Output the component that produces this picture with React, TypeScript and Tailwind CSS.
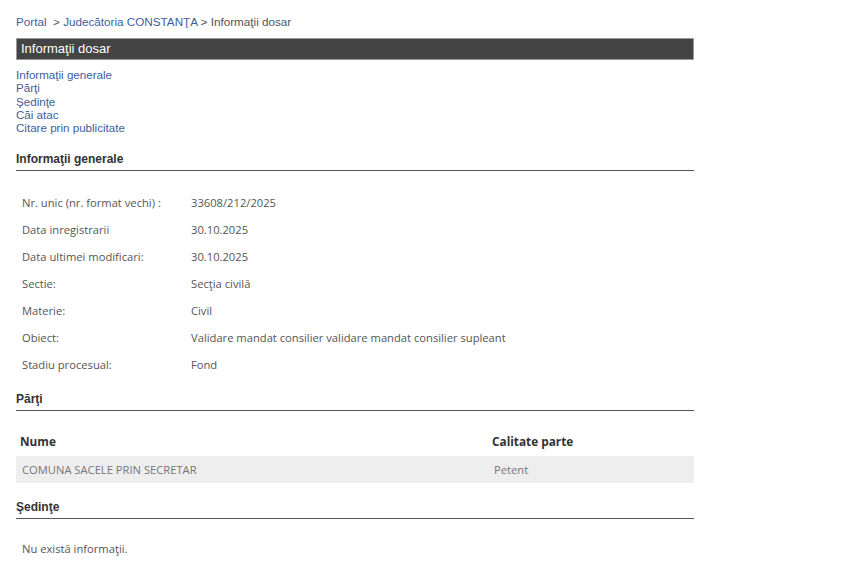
import React from 'react'

const info: [string, string][] = [
  ['Nr. unic (nr. format vechi) :', '33608/212/2025'],
  ['Data inregistrarii', '30.10.2025'],
  ['Data ultimei modificari:', '30.10.2025'],
  ['Sectie:', 'Secţia civilă'],
  ['Materie:', 'Civil'],
  ['Obiect:', 'Validare mandat consilier validare mandat consilier supleant'],
  ['Stadiu procesual:', 'Fond'],
]

const links = ['Informaţii generale', 'Părţi', 'Şedinţe', 'Căi atac', 'Citare prin publicitate']

function SectionTitle({ children }: { children: React.ReactNode }) {
  return (
    <div className="leading-[14px] pb-[4px] border-b border-[#555] text-[12px] font-bold text-[#333]">
      {children}
    </div>
  )
}

const body = { fontFamily: '"Open Sans", "DejaVu Sans", sans-serif' }

export default function App() {
  return (
    <div className="min-h-screen bg-white" style={{ fontFamily: '"Liberation Sans", Arial, sans-serif' }}>
      <div className="w-[678px] ml-[16px] pt-[15px]">
        <div className="text-[11.7px] text-[#555] leading-[14px]">
          <span className="text-[#3d5e9e]">Portal</span>
          <span> &nbsp;&gt; </span>
          <span className="text-[#3d5e9e]">Judecătoria CONSTANŢA</span>
          <span> &gt; Informaţii dosar</span>
        </div>

        <div className="mt-[9px] h-[22px] bg-[#444] border border-[#999] flex items-center px-[4px] text-[13px] text-white">
          Informaţii dosar
        </div>

        <div className="mt-[8px] flex flex-col text-[11.6px] leading-[13.3px] text-[#3d5e9e]">
          {links.map(l => (
            <span key={l}>{l}</span>
          ))}
        </div>

        <div className="mt-[18px]">
          <SectionTitle>Informaţii generale</SectionTitle>
        </div>

        <div className="mt-[18px] flex flex-col text-[11.2px] text-[#555]" style={body}>
          {info.map(([k, v]) => (
            <div key={k} className="h-[27px] flex items-center">
              <span className="w-[175px] pl-[6px]">{k}</span>
              <span>{v}</span>
            </div>
          ))}
        </div>

        <div className="mt-[14px]">
          <SectionTitle>Părţi</SectionTitle>
        </div>

        <div className="mt-[15px] text-[11.8px]" style={body}>
          <div className="h-[30px] flex items-center font-bold text-[#333]">
            <span className="w-[476px] pl-[4px]">Nume</span>
            <span>Calitate parte</span>
          </div>
          <div className="h-[27px] flex items-center bg-[#eee] text-[#777] text-[11.2px]">
            <span className="w-[478px] pl-[6px]">COMUNA SACELE PRIN SECRETAR</span>
            <span>Petent</span>
          </div>
        </div>

        <div className="mt-[17px]">
          <SectionTitle>Şedinţe</SectionTitle>
        </div>

        <div className="mt-[22px] pl-[6px] text-[11.2px] text-[#555]" style={body}>
          Nu există informaţii.
        </div>
      </div>
    </div>
  )
}
